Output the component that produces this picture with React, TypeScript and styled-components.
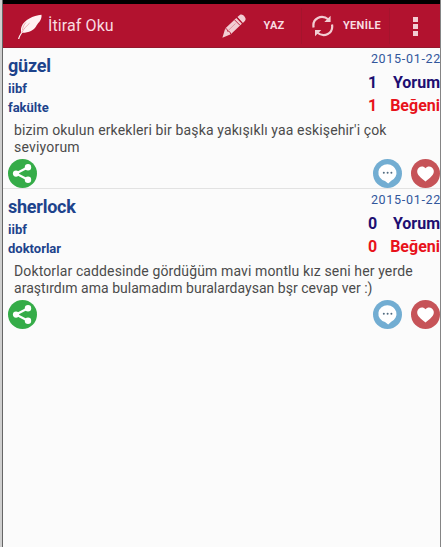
import React from 'react';
import styled, { createGlobalStyle } from 'styled-components';

const GlobalStyle = createGlobalStyle`
  * { box-sizing: border-box; }
  body { margin: 0; background: #fbfbfb; overflow: hidden; }
`;

const Screen = styled.div`
  width: 441px;
  height: 547px;
  overflow: hidden;
  background: #fbfbfb;
  border-left: 2px solid #cfcfcf;
  border-right: 1px solid #858585;
  font-family: Roboto, "Liberation Sans", sans-serif;
`;

const Frame = styled.div`
  height: 100%;
  border-left: 1px solid #666;
`;

const StatusBar = styled.div`
  height: 4px;
  background: #000;
`;

const ActionBar = styled.header`
  height: 44px;
  display: flex;
  align-items: center;
  background: #b2122f;
  border-bottom: 1px solid #94192e;
  color: #f8dce1;
`;

const AppIcon = styled.svg`
  flex: none;
  width: 26px;
  height: 26px;
  margin: 2px 5px 0 14px;
`;

const Title = styled.h1`
  flex: none;
  margin: 1px 0 0;
  width: 174px;
  font-size: 16px;
  font-weight: 400;
  letter-spacing: 0.1px;
  line-height: 20px;
  white-space: nowrap;
`;

const BarButton = styled.button<{ $width: number; $gap: number; $inset: number }>`
  flex: none;
  display: flex;
  align-items: center;
  gap: ${p => p.$gap}px;
  width: ${p => p.$width}px;
  height: 36px;
  padding: 0 0 0 ${p => p.$inset}px;
  border: 0;
  border-right: 1px solid #a5142d;
  background: none;
  color: #f8dce1;
  font: 700 11px/14px Roboto, sans-serif;
  letter-spacing: 0.3px;
  white-space: nowrap;
  svg { flex: none; }
`;

const MenuButton = styled.button`
  flex: none;
  display: flex;
  flex-direction: column;
  gap: 2px;
  padding: 0;
  margin: 1px 0 0 23px;
  border: 0;
  background: none;
`;

const MenuDot = styled.span`
  width: 5px;
  height: 5px;
  background: #f2cdd3;
`;

const Post = styled.article`
  height: 141px;
  border-bottom: 1px solid #e2e2e2;
  &:last-child { border-bottom: 0; }
`;

const PostHead = styled.div`
  display: flex;
  justify-content: space-between;
  height: 74px;
  padding-left: 5px;
`;

const Names = styled.div`
  padding-top: 7px;
  color: #1d438c;
  font-weight: 700;
`;

const UserName = styled.h2<{ $spacing: number }>`
  margin: 0 0 3px;
  font-size: 18px;
  line-height: 22px;
  letter-spacing: ${p => p.$spacing}px;
`;

const Tag = styled.div`
  font-size: 13px;
  line-height: 18.5px;
`;

const Stats = styled.div`
  display: flex;
  flex-direction: column;
  align-items: flex-end;
  padding-top: 3px;
`;

const PostDate = styled.time`
  color: #31569b;
  font-size: 12.5px;
  line-height: 16px;
  letter-spacing: 0.7px;
  margin: 0 -1px 5px 0;
`;

const Stat = styled.div<{ $color: string }>`
  display: flex;
  justify-content: space-between;
  width: 72px;
  color: ${p => p.$color};
  font-size: 16px;
  font-weight: 700;
  line-height: 22.5px;
`;

const Message = styled.p`
  margin: 0;
  padding-left: 11px;
  height: 37px;
  color: #4b4b4b;
  font-size: 14px;
  line-height: 16.5px;
`;

const Line = styled.span<{ $spacing: number }>`
  display: block;
  letter-spacing: ${p => p.$spacing}px;
  white-space: nowrap;
`;

const Actions = styled.div`
  display: flex;
  align-items: center;
  gap: 9px;
  height: 29px;
  padding-left: 5px;
  svg { flex: none; display: block; }
  svg:first-child { margin-right: auto; }
`;

const Feather = () => (
  <AppIcon viewBox="0 0 26 26">
    <path d="M24.5 0.8C16 1.5 7.5 6 4.6 12.5C3.6 15 4 17 4.2 18.3C3 20.5 1.5 22.5 1 25H2.3C2.8 22.8 4 20.7 5.4 18.8C12 18.8 17 16 19 12.5C20 10.8 20.7 9.4 22.3 8C24 6 24.8 3.5 24.5 0.8Z" fill="#fff2f3" />
    <path d="M4.8 18.5C7 14.5 9.5 12 12.5 9.3M5.5 16C5.8 13 7 10.5 9 8.5" fill="none" stroke="#e58c99" strokeWidth="0.7" />
  </AppIcon>
);

const Pencil = () => (
  <svg width="24" height="24" viewBox="0 0 24 24" fill="#f2cdd3">
    <path d="M0.4 23.7L3.2 14.6L14.3 4L19.9 9.8L8.8 20.3ZM15.4 3L17.8 0.9C19.4-0.2 21.2.8 22.3 2.2C23.5 3.7 24.3 5.2 22.9 6.9L20.9 8.9Z" />
    <path d="M12.5 5.8L18.2 11.5M14.8 3.4L20.4 9.3M3.3 14.7C5.2 14.8 5.6 15.8 5.5 17.2C7.4 17 8.3 18 8.7 20.2" fill="none" stroke="#b2122f" strokeWidth="0.9" />
    <path d="M6 16.8L13.5 9.5" fill="none" stroke="#d9808e" strokeWidth="0.7" />
  </svg>
);

const Refresh = () => (
  <svg width="22" height="22" viewBox="0 0 22 22" fill="none" stroke="#f2cdd3" strokeWidth="2.2">
    <path d="M1.6 12.5C0 3.5 9.5-1.2 16.5 4.5" />
    <path d="M20 9.5C21.6 18.5 12.1 23.2 5.1 17.5" />
    <path d="M18.6 .8V7.1H12.3ZM3 21.2V14.9H9.3Z" fill="#f2cdd3" stroke="none" />
  </svg>
);

const ShareIcon = () => (
  <svg width="29" height="29" viewBox="0 0 29 29">
    <circle cx="14.5" cy="14.5" r="14.5" fill="#35ac48" />
    <path d="M20 8.2L8 14.6L20 20.7" fill="none" stroke="#fff" strokeWidth="2.2" />
    <g fill="#fff"><circle cx="20" cy="8.2" r="3.2" /><circle cx="8" cy="14.6" r="3.1" /><circle cx="20" cy="20.7" r="3.2" /></g>
  </svg>
);

const CommentIcon = () => (
  <svg width="29" height="29" viewBox="0 0 29 29">
    <circle cx="14.5" cy="14.5" r="14.5" fill="#72add2" />
    <path d="M14.5 5.3A9 8.5 0 0 1 18.5 21.4L15.2 24.5L12 22A9 8.5 0 0 1 14.5 5.3Z" fill="#fff" />
    <g fill="#526b80"><circle cx="10.8" cy="13.7" r="1" /><circle cx="14.6" cy="13.7" r="1" /><circle cx="18.4" cy="13.7" r="1" /></g>
  </svg>
);

const HeartIcon = () => (
  <svg width="29" height="29" viewBox="0 0 29 29">
    <circle cx="14.5" cy="14.5" r="14.5" fill="#c65358" />
    <path d="M14.5 9.2C17 6 21.8 7.4 22.7 11.3C23.7 16 18.5 19 14.5 22.6C10.5 19 5.3 16 6.3 11.3C7.2 7.4 12 6 14.5 9.2Z" fill="#fff" />
  </svg>
);

type Spaced = [text: string, spacing: number];
interface PostData {
  user: Spaced;
  tags: string[];
  comments: number;
  likes: number;
  lines: Spaced[];
}

const posts: PostData[] = [
  {
    user: ['güzel', -0.2],
    tags: ['iibf', 'fakülte'],
    comments: 1,
    likes: 1,
    lines: [['bizim okulun erkekleri bir başka yakışıklı yaa eskişehir\'i çok', 0.13], ['seviyorum', 0.2]],
  },
  {
    user: ['sherlock', -0.25],
    tags: ['iibf', 'doktorlar'],
    comments: 0,
    likes: 0,
    lines: [['Doktorlar caddesinde gördüğüm mavi montlu kız seni her yerde', 0.12], ['araştırdım ama bulamadım buralardaysan bşr cevap ver :)', 0.03]],
  },
];

export default function App() {
  return (
    <Screen>
      <GlobalStyle />
      <Frame>
        <StatusBar />
        <ActionBar>
          <Feather />
          <Title>İtiraf Oku</Title>
          <BarButton $width={80} $gap={17.5} $inset={0}><Pencil />YAZ</BarButton>
          <BarButton $width={88} $gap={9} $inset={10}><Refresh />YENİLE</BarButton>
          <MenuButton aria-label="Menu"><MenuDot /><MenuDot /><MenuDot /></MenuButton>
        </ActionBar>
        {posts.map(post => (
          <Post key={post.user[0]}>
            <PostHead>
              <Names>
                <UserName $spacing={post.user[1]}>{post.user[0]}</UserName>
                {post.tags.map(tag => <Tag key={tag}>{tag}</Tag>)}
              </Names>
              <Stats>
                <PostDate>2015-01-22</PostDate>
                <Stat $color="#1e0f72"><span>{post.comments}</span><span>Yorum</span></Stat>
                <Stat $color="#e8121b"><span>{post.likes}</span><span>Beğeni</span></Stat>
              </Stats>
            </PostHead>
            <Message>
              {post.lines.map(([text, spacing]) => <Line key={text} $spacing={spacing}>{text}</Line>)}
            </Message>
            <Actions><ShareIcon /><CommentIcon /><HeartIcon /></Actions>
          </Post>
        ))}
      </Frame>
    </Screen>
  );
}
